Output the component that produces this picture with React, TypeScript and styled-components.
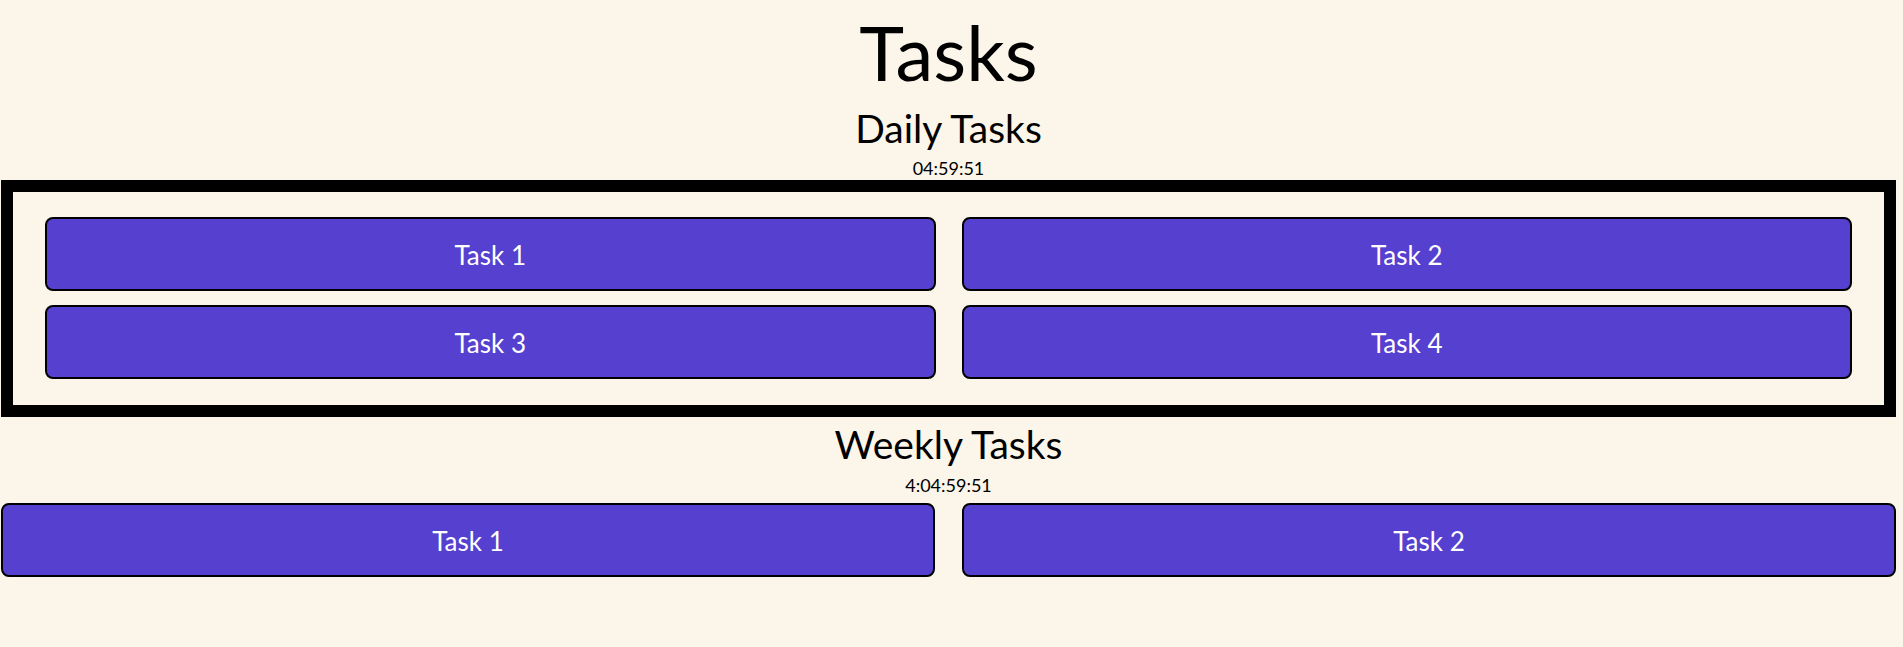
import React from "react";
import styled, { createGlobalStyle } from "styled-components";

const GlobalStyle = createGlobalStyle`
  html, body {
    margin: 0;
    padding: 0;
    background-color: #fcf5e9;
  }
  body {
    font-family: Lato, "Open Sans", sans-serif;
    color: #000;
  }
`;

const Page = styled.div`
  display: flex;
  flex-direction: column;
  align-items: stretch;
  padding: 0 7px 0 1px;
`;

const Title = styled.h1`
  margin: 0;
  font-size: 76px;
  font-weight: 400;
  line-height: 104px;
  text-align: center;
`;

const SectionTitle = styled.h2<{ gapTop?: number }>`
  margin: ${({ gapTop }) => gapTop ?? 0}px 0 0;
  font-size: 39px;
  font-weight: 400;
  line-height: 48px;
  text-align: center;
`;

const Timer = styled.div<{ lh: number; gapTop?: number }>`
  margin-top: ${({ gapTop }) => gapTop ?? 0}px;
  font-size: 18px;
  line-height: ${({ lh }) => lh}px;
  text-align: center;
`;

const TaskGrid = styled.div<{ boxed?: boolean }>`
  display: grid;
  grid-template-columns: 1fr 1fr;
  column-gap: ${({ boxed }) => (boxed ? 26 : 27)}px;
  row-gap: 14px;
  border: ${({ boxed }) => (boxed ? "12px solid #000" : "none")};
  padding: ${({ boxed }) => (boxed ? "25px 32px 26px" : "0")};
`;

const TaskButton = styled.button`
  height: 74px;
  display: flex;
  align-items: center;
  justify-content: center;
  padding: 2px 0 0;
  background-color: #5540cf;
  color: #fff;
  border: 2px solid #000;
  border-radius: 8px;
  font-family: Lato, "Open Sans", sans-serif;
  font-size: 26px;
  cursor: pointer;
`;

const daily = ["Task 1", "Task 2", "Task 3", "Task 4"];
const weekly = ["Task 1", "Task 2"];

export default function App() {
  return (
    <>
      <GlobalStyle />
      <Page>
        <Title>Tasks</Title>
        <SectionTitle>Daily Tasks</SectionTitle>
        <Timer lh={24} gapTop={4}>04:59:51</Timer>
        <TaskGrid boxed>
          {daily.map((t) => (
            <TaskButton key={t}>{t}</TaskButton>
          ))}
        </TaskGrid>
        <SectionTitle gapTop={3}>Weekly Tasks</SectionTitle>
        <Timer lh={35}>4:04:59:51</Timer>
        <TaskGrid>
          {weekly.map((t) => (
            <TaskButton key={t}>{t}</TaskButton>
          ))}
        </TaskGrid>
      </Page>
    </>
  );
}
